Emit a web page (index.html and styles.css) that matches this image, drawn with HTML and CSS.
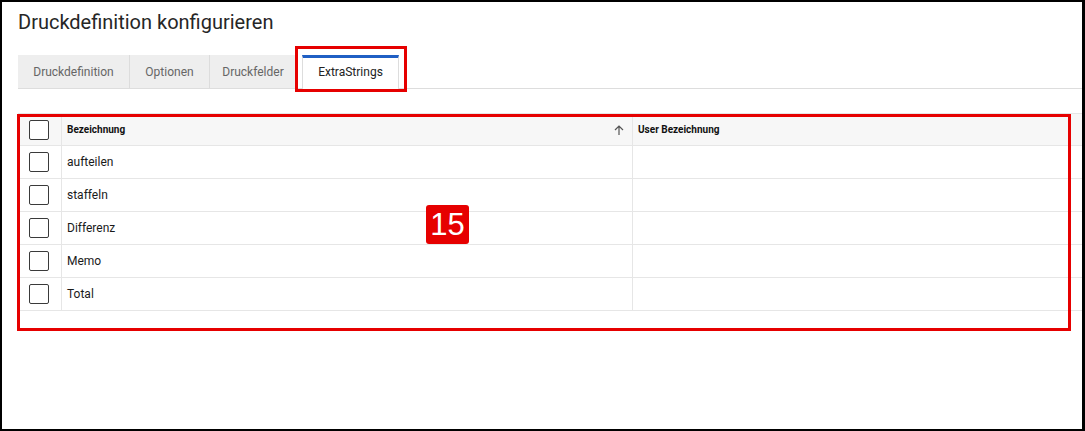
FILE: index.html
```html
<!DOCTYPE html>
<html lang="de">
<head>
<meta charset="utf-8">
<title>Druckdefinition konfigurieren</title>
<link rel="stylesheet" href="styles.css">
</head>
<body>
<div class="window">
  <h1 class="title">Druckdefinition konfigurieren</h1>
  <div class="tabs">
    <div class="tab tab-1">Druckdefinition</div>
    <div class="tab tab-2">Optionen</div>
    <div class="tab tab-3">Druckfelder</div>
    <div class="tab tab-active">ExtraStrings</div>
    <div class="mark mark-tab"></div>
  </div>
  <div class="grid">
    <div class="row head">
      <div class="cell cell-check"><span class="check"></span></div>
      <div class="cell cell-name">Bezeichnung
        <svg class="sort" width="10" height="10" viewBox="0 0 10 10"><path d="M5 10V1M1 5L5 1L9 5" fill="none" stroke="#555" stroke-width="1.2"/></svg>
      </div>
      <div class="cell cell-user">User Bezeichnung</div>
    </div>
    <div class="row">
      <div class="cell cell-check"><span class="check"></span></div>
      <div class="cell cell-name">aufteilen</div>
      <div class="cell cell-user"></div>
    </div>
    <div class="row">
      <div class="cell cell-check"><span class="check"></span></div>
      <div class="cell cell-name">staffeln</div>
      <div class="cell cell-user"></div>
    </div>
    <div class="row">
      <div class="cell cell-check"><span class="check"></span></div>
      <div class="cell cell-name">Differenz</div>
      <div class="cell cell-user"></div>
    </div>
    <div class="row">
      <div class="cell cell-check"><span class="check"></span></div>
      <div class="cell cell-name">Memo</div>
      <div class="cell cell-user"></div>
    </div>
    <div class="row">
      <div class="cell cell-check"><span class="check"></span></div>
      <div class="cell cell-name">Total</div>
      <div class="cell cell-user"></div>
    </div>
    <div class="mark mark-grid"></div>
    <div class="badge">15</div>
  </div>
</div>
</body>
</html>
```

FILE: styles.css
```css
* { box-sizing: border-box; }
html, body { margin: 0; padding: 0; background: #fff; }
body { font-family: Roboto, "Liberation Sans", Arial, sans-serif; color: #222; }

.window {
  width: 1085px;
  height: 431px;
  border: 2px solid #000;
  border-right-width: 3px;
  padding: 8px 0 0 16px;
  overflow: hidden;
}

.title {
  margin: 0 0 21px 0;
  font-size: 20px;
  line-height: 24px;
  font-weight: 400;
  color: #262626;
}

.tabs {
  position: relative;
  display: flex;
  align-items: flex-end;
  height: 34px;
  border-bottom: 1px solid #ddd;
}
.tab {
  height: 33px;
  display: flex;
  align-items: center;
  justify-content: center;
  background: #eeeeee;
  border-right: 1px solid #dcdcdc;
  font-size: 12px;
  color: #666;
}
.tab-1 { width: 112px; }
.tab-2 { width: 80px; }
.tab-3 { width: 88px; border-right: none; padding-right: 2px; }
.tab-active {
  margin-left: 4px;
  width: 97px;
  height: 34px;
  margin-bottom: -1px;
  background: #fff;
  border-left: 1px solid #ddd;
  border-right: 1px solid #ddd;
  border-top: 3px solid #1f5fc4;
  color: #222;
  padding-bottom: 4px;
}

.grid {
  position: relative;
  margin-top: 24px;
  border-top: 1px solid #e6e6e6;
}
.row {
  display: grid;
  grid-template-columns: 44px 571px 1fr;
  height: 33px;
  border-bottom: 1px solid #e6e6e6;
  font-size: 12px;
  color: #1a1a1a;
}
.row.head {
  height: 32px;
  background: #f7f7f7;
  font-size: 10px;
  font-weight: 700;
  color: #111;
}
.cell {
  display: flex;
  align-items: center;
  border-right: 1px solid #e6e6e6;
  padding-left: 5px;
}
.cell-user { border-right: none; }
.cell-check { justify-content: center; padding-left: 0; padding-right: 2px; }
.check {
  width: 20px;
  height: 20px;
  border: 1px solid #3a3a3a;
  border-radius: 2px;
  background: #fff;
}
.cell-name { position: relative; }
.sort { position: absolute; right: 8px; top: 11px; }

.mark {
  position: absolute;
  border: 3px solid #e60000;
  pointer-events: none;
}
.mark-tab { left: 277px; top: -9px; width: 112px; height: 46px; }
.mark-grid { left: -1px; top: 0px; width: 1054px; height: 217px; }

.badge {
  position: absolute;
  left: 408px;
  top: 91px;
  width: 43px;
  height: 39px;
  background: #e60000;
  color: #fff;
  border-radius: 3px;
  font-family: "Liberation Sans", Arial, sans-serif;
  font-size: 31px;
  line-height: 39px;
  text-align: center;
}
```
